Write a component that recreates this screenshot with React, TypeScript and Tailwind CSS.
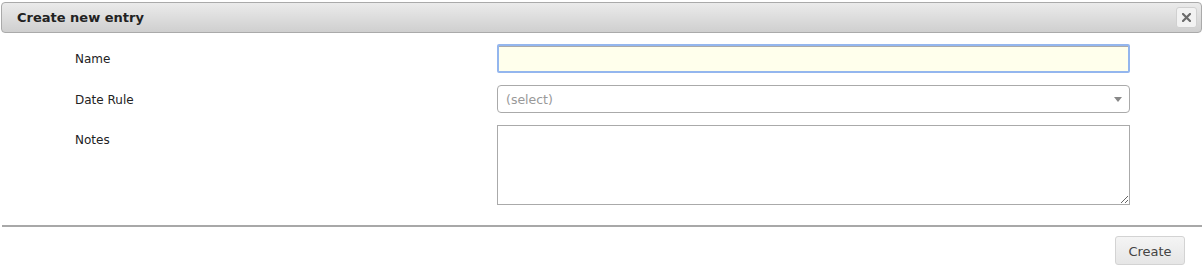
import { useState } from 'react';

export default function App() {
  const [name, setName] = useState('');
  const [notes, setNotes] = useState('');

  return (
    <div className="w-[1204px] h-[276px] bg-white font-['DejaVu_Sans',sans-serif] text-[12px] text-[#222]">
      {/* dialog title bar */}
      <div className="ml-px mr-[2px] pt-[2px]">
        <div className="h-[31px] flex items-center justify-between rounded-[4px] border border-[#aaa] bg-gradient-to-b from-[#ebebeb] to-[#cfcfcf] pl-[15px] pr-[4px]">
          <span className="font-bold text-[13px] text-[#222]">Create new entry</span>
          <button className="w-[21px] h-[21px] flex items-center justify-center rounded-[3px] border border-[#d0d0d0] bg-[#f2f2f2]">
            <svg width="9" height="9" viewBox="0 0 9 9">
              <path d="M1 1L8 8M8 1L1 8" stroke="#6b6b6b" strokeWidth="2.2" strokeLinecap="square" />
            </svg>
          </button>
        </div>
      </div>

      {/* form rows */}
      <div className="pt-[11px] flex flex-col gap-3">
        <div className="flex items-start">
          <label className="w-[497px] pl-[75px] pt-[6px]">Name</label>
          <input
            autoFocus
            value={name}
            onChange={(e) => setName(e.target.value)}
            className="w-[633px] h-[29px] rounded-[2px] border-2 border-[#94b6ee] bg-[#ffffec] px-[4px] outline-none text-[13px] shadow-[inset_0_1px_0_#aaa]"
          />
        </div>
        <div className="flex items-start">
          <label className="w-[497px] pl-[75px] pt-[6px]">Date Rule</label>
          <div className="w-[633px] h-[28px] rounded-[4px] border border-[#aaa] bg-white flex items-center justify-between pl-[8px] pr-[7px]">
            <span className="text-[#999] text-[12.5px] pt-[2px]">(select)</span>
            <svg width="8" height="5" viewBox="0 0 8 5">
              <path d="M0 0H8L4 5Z" fill="#888" />
            </svg>
          </div>
        </div>
        <div className="flex items-start">
          <label className="w-[497px] pl-[75px] pt-[6px]">Notes</label>
          <textarea
            value={notes}
            onChange={(e) => setNotes(e.target.value)}
            className="w-[633px] h-[80px] border border-[#aaa] bg-white outline-none px-1 text-[13px]"
          />
        </div>
      </div>

      {/* footer */}
      <div className="mt-[20px] ml-[2px] mr-[2px] border-t-2 border-[#a8a8a8]"></div>
      <div className="flex justify-end pr-[19px] pt-[9px]">
        <button className="w-[70px] h-[29px] pt-[2px] rounded-[3px] border border-[#d3d3d3] bg-gradient-to-b from-[#f4f4f4] to-[#e6e6e6] text-[13px] text-[#444]">
          Create
        </button>
      </div>
    </div>
  );
}
